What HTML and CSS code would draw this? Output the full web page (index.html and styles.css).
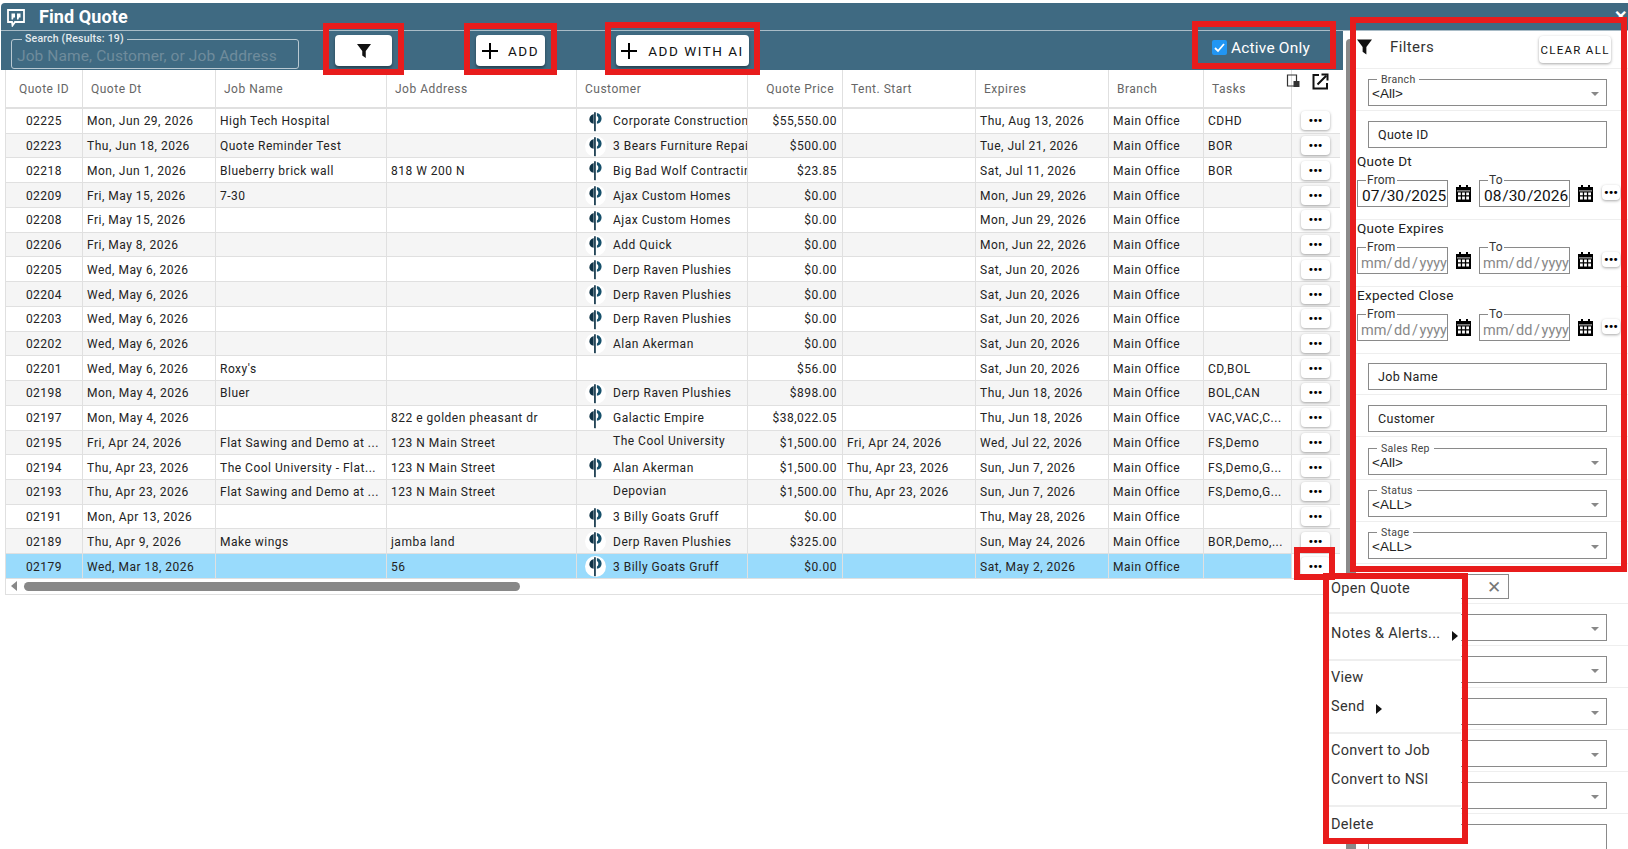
FILE: index.html
```html
<!DOCTYPE html>
<html lang="en">
<head>
    <meta charset="UTF-8">
    <meta name="viewport" content="width=device-width, initial-scale=1.0">
    <title>Find Quote</title>
    <link rel="stylesheet" href="styles.css">
</head>
<body>
    <svg class="defs" width="0" height="0">
        <symbol id="logo" viewBox="0 0 16 22">
            <path d="M6 3C2.500 4 1.500 6.500 1.500 8.500c0 2.500 1.500 4.500 4.500 5Z" fill="#0f3347"/>
            <path d="M9.500 2c3.500.8 5 3.500 5 6 0 2.800-2 5-5 5.500V11c1-.5 1.500-1.800 1.500-3 0-1.500-.5-2.500-1.500-3Z" fill="#16506b"/>
            <path d="M6.500 1h1.800v20.500H6.500Z" fill="#0f3347"/>
        </symbol>
        <symbol id="calendar" viewBox="0 0 15 17">
            <path d="M3 0h2v2h5V0h2v2h3v15H0V2h3Z" fill="#000"/>
            <path d="M1 5.500h13v.8H1Z" fill="#fff"/>
            <path d="M2 7.500h2.800v2.800H2ZM6.100 7.500h2.800v2.800H6.100ZM10.200 7.500H13v2.800h-2.800ZM2 11.600h2.800v2.800H2ZM6.100 11.600h2.800v2.800H6.100ZM10.200 11.600H13v2.800h-2.800Z" fill="#fff"/>
        </symbol>
        <symbol id="funnel" viewBox="0 0 16 16">
            <path d="M0 0h16L10 8v8L6 13V8Z" fill="#111"/>
        </symbol>
        <symbol id="plus" viewBox="0 0 16 16">
            <path d="M7 0h2v7h7v2H9v7H7V9H0V7h7Z" fill="#000"/>
        </symbol>
    </svg>

    <div class="window">
        <div class="title-bar">
            <svg class="title-icon" viewBox="0 0 18 18" width="18" height="18">
                <path d="M1 1h16v12H8l-2.500 3.500L5 13H1Z" fill="none" stroke="#fff" stroke-width="1.800"/>
                <path d="M4.500 4.500h3.500v4H6.500L6 10.500H4.500ZM10 4.500h3.500v4H12l-.5 2H10Z" fill="#fff"/>
            </svg>
            <span class="title-text">Find Quote</span>
            <span class="close-btn">&#10005;</span>
        </div>

        <div class="main">
            <div class="left-pane">
                <div class="toolbar">
                    <div class="search-field">
                        <span class="search-label">Search (Results: 19)</span>
                        <span class="search-placeholder">Job Name, Customer, or Job Address</span>
                    </div>
                    <button class="tool-btn filter-btn"><svg width="14" height="14"><use href="#funnel"/></svg></button>
                    <button class="tool-btn add-btn"><svg width="16" height="16"><use href="#plus"/></svg>ADD</button>
                    <button class="tool-btn ai-btn"><svg width="16" height="16"><use href="#plus"/></svg>ADD WITH AI</button>
                    <label class="active-only"><span class="check">
                        <svg viewBox="0 0 15 15" width="15" height="15"><path d="M3 8l3 3 6-7" fill="none" stroke="#fff" stroke-width="1.800"/></svg>
                    </span>Active Only</label>
                </div>

                <div class="table-frame">
                    <table class="quotes">
                        <thead>
                            <tr>
                                <th class="center">Quote ID</th><th>Quote Dt</th><th>Job Name</th><th>Job Address</th><th>Customer</th><th class="price-head">Quote Price</th><th>Tent. Start</th><th>Expires</th><th>Branch</th><th>Tasks</th>
                                <th class="tools-head">
                                    <svg class="device-icon" viewBox="0 0 14 14" width="14" height="14"><path d="M1.500 1h9v11h-9Z" fill="none" stroke="#333" stroke-width="1.200"/><path d="M7.500 7h6v6h-6Z" fill="#333"/></svg>
                                    <svg class="open-icon" viewBox="0 0 17 17" width="17" height="17"><path d="M7 2H1.500v13.500H15V10" fill="none" stroke="#111" stroke-width="2"/><path d="M5.500 11.500 14 3M9.500 1.500h6v6" fill="none" stroke="#111" stroke-width="2"/></svg>
                                </th>
                            </tr>
                        </thead>
                        <tbody>
                            <tr><td class="center">02225</td><td>Mon, Jun 29, 2026</td><td>High Tech Hospital</td><td></td><td class="cust"><svg class="logo"><use href="#logo"/></svg>Corporate Construction</td><td class="price">$55,550.00</td><td></td><td>Thu, Aug 13, 2026</td><td>Main Office</td><td>CDHD</td><td class="act"><button class="dots">&bull;&bull;&bull;</button></td></tr>
                            <tr><td class="center">02223</td><td>Thu, Jun 18, 2026</td><td>Quote Reminder Test</td><td></td><td class="cust"><svg class="logo"><use href="#logo"/></svg>3 Bears Furniture Repair</td><td class="price">$500.00</td><td></td><td>Tue, Jul 21, 2026</td><td>Main Office</td><td>BOR</td><td class="act"><button class="dots">&bull;&bull;&bull;</button></td></tr>
                            <tr><td class="center">02218</td><td>Mon, Jun 1, 2026</td><td>Blueberry brick wall</td><td>818 W 200 N</td><td class="cust"><svg class="logo"><use href="#logo"/></svg>Big Bad Wolf Contracting</td><td class="price">$23.85</td><td></td><td>Sat, Jul 11, 2026</td><td>Main Office</td><td>BOR</td><td class="act"><button class="dots">&bull;&bull;&bull;</button></td></tr>
                            <tr><td class="center">02209</td><td>Fri, May 15, 2026</td><td>7-30</td><td></td><td class="cust"><svg class="logo"><use href="#logo"/></svg>Ajax Custom Homes</td><td class="price">$0.00</td><td></td><td>Mon, Jun 29, 2026</td><td>Main Office</td><td></td><td class="act"><button class="dots">&bull;&bull;&bull;</button></td></tr>
                            <tr><td class="center">02208</td><td>Fri, May 15, 2026</td><td></td><td></td><td class="cust"><svg class="logo"><use href="#logo"/></svg>Ajax Custom Homes</td><td class="price">$0.00</td><td></td><td>Mon, Jun 29, 2026</td><td>Main Office</td><td></td><td class="act"><button class="dots">&bull;&bull;&bull;</button></td></tr>
                            <tr><td class="center">02206</td><td>Fri, May 8, 2026</td><td></td><td></td><td class="cust"><svg class="logo"><use href="#logo"/></svg>Add Quick</td><td class="price">$0.00</td><td></td><td>Mon, Jun 22, 2026</td><td>Main Office</td><td></td><td class="act"><button class="dots">&bull;&bull;&bull;</button></td></tr>
                            <tr><td class="center">02205</td><td>Wed, May 6, 2026</td><td></td><td></td><td class="cust"><svg class="logo"><use href="#logo"/></svg>Derp Raven Plushies</td><td class="price">$0.00</td><td></td><td>Sat, Jun 20, 2026</td><td>Main Office</td><td></td><td class="act"><button class="dots">&bull;&bull;&bull;</button></td></tr>
                            <tr><td class="center">02204</td><td>Wed, May 6, 2026</td><td></td><td></td><td class="cust"><svg class="logo"><use href="#logo"/></svg>Derp Raven Plushies</td><td class="price">$0.00</td><td></td><td>Sat, Jun 20, 2026</td><td>Main Office</td><td></td><td class="act"><button class="dots">&bull;&bull;&bull;</button></td></tr>
                            <tr><td class="center">02203</td><td>Wed, May 6, 2026</td><td></td><td></td><td class="cust"><svg class="logo"><use href="#logo"/></svg>Derp Raven Plushies</td><td class="price">$0.00</td><td></td><td>Sat, Jun 20, 2026</td><td>Main Office</td><td></td><td class="act"><button class="dots">&bull;&bull;&bull;</button></td></tr>
                            <tr><td class="center">02202</td><td>Wed, May 6, 2026</td><td></td><td></td><td class="cust"><svg class="logo"><use href="#logo"/></svg>Alan Akerman</td><td class="price">$0.00</td><td></td><td>Sat, Jun 20, 2026</td><td>Main Office</td><td></td><td class="act"><button class="dots">&bull;&bull;&bull;</button></td></tr>
                            <tr><td class="center">02201</td><td>Wed, May 6, 2026</td><td>Roxy's</td><td></td><td class="cust"></td><td class="price">$56.00</td><td></td><td>Sat, Jun 20, 2026</td><td>Main Office</td><td>CD,BOL</td><td class="act"><button class="dots">&bull;&bull;&bull;</button></td></tr>
                            <tr><td class="center">02198</td><td>Mon, May 4, 2026</td><td>Bluer</td><td></td><td class="cust"><svg class="logo"><use href="#logo"/></svg>Derp Raven Plushies</td><td class="price">$898.00</td><td></td><td>Thu, Jun 18, 2026</td><td>Main Office</td><td>BOL,CAN</td><td class="act"><button class="dots">&bull;&bull;&bull;</button></td></tr>
                            <tr><td class="center">02197</td><td>Mon, May 4, 2026</td><td></td><td>822 e golden pheasant dr</td><td class="cust"><svg class="logo"><use href="#logo"/></svg>Galactic Empire</td><td class="price">$38,022.05</td><td></td><td>Thu, Jun 18, 2026</td><td>Main Office</td><td>VAC,VAC,C...</td><td class="act"><button class="dots">&bull;&bull;&bull;</button></td></tr>
                            <tr><td class="center">02195</td><td>Fri, Apr 24, 2026</td><td>Flat Sawing and Demo at ...</td><td>123 N Main Street</td><td class="cust no-logo">The Cool University</td><td class="price">$1,500.00</td><td>Fri, Apr 24, 2026</td><td>Wed, Jul 22, 2026</td><td>Main Office</td><td>FS,Demo</td><td class="act"><button class="dots">&bull;&bull;&bull;</button></td></tr>
                            <tr><td class="center">02194</td><td>Thu, Apr 23, 2026</td><td>The Cool University - Flat...</td><td>123 N Main Street</td><td class="cust"><svg class="logo"><use href="#logo"/></svg>Alan Akerman</td><td class="price">$1,500.00</td><td>Thu, Apr 23, 2026</td><td>Sun, Jun 7, 2026</td><td>Main Office</td><td>FS,Demo,G...</td><td class="act"><button class="dots">&bull;&bull;&bull;</button></td></tr>
                            <tr><td class="center">02193</td><td>Thu, Apr 23, 2026</td><td>Flat Sawing and Demo at ...</td><td>123 N Main Street</td><td class="cust no-logo">Depovian</td><td class="price">$1,500.00</td><td>Thu, Apr 23, 2026</td><td>Sun, Jun 7, 2026</td><td>Main Office</td><td>FS,Demo,G...</td><td class="act"><button class="dots">&bull;&bull;&bull;</button></td></tr>
                            <tr><td class="center">02191</td><td>Mon, Apr 13, 2026</td><td></td><td></td><td class="cust"><svg class="logo"><use href="#logo"/></svg>3 Billy Goats Gruff</td><td class="price">$0.00</td><td></td><td>Thu, May 28, 2026</td><td>Main Office</td><td></td><td class="act"><button class="dots">&bull;&bull;&bull;</button></td></tr>
                            <tr><td class="center">02189</td><td>Thu, Apr 9, 2026</td><td>Make wings</td><td>jamba land</td><td class="cust"><svg class="logo"><use href="#logo"/></svg>Derp Raven Plushies</td><td class="price">$325.00</td><td></td><td>Sun, May 24, 2026</td><td>Main Office</td><td>BOR,Demo,...</td><td class="act"><button class="dots">&bull;&bull;&bull;</button></td></tr>
                            <tr class="selected"><td class="center">02179</td><td>Wed, Mar 18, 2026</td><td></td><td>56</td><td class="cust"><svg class="logo"><use href="#logo"/></svg>3 Billy Goats Gruff</td><td class="price">$0.00</td><td></td><td>Sat, May 2, 2026</td><td>Main Office</td><td></td><td class="act"><button class="dots">&bull;&bull;&bull;</button></td></tr>
                        </tbody>
                    </table>
                    <div class="h-scroll">
                        <span class="scroll-arrow"></span>
                        <span class="scroll-thumb"></span>
                    </div>
                </div>
            </div>

            <div class="splitter"></div>

            <aside class="filters">
                <div class="filters-head">
                    <svg width="15" height="16"><use href="#funnel"/></svg>
                    <span class="filters-title">Filters</span>
                    <button class="clear-btn">CLEAR ALL</button>
                </div>

                <div class="row"><div class="field select"><span class="field-label">Branch</span><span class="select-value">&lt;All&gt;</span><span class="arrow"></span></div></div>
                <div class="row plain"><div class="field text">Quote ID</div></div>

                <div class="date-group first">
                    <div class="group-title">Quote Dt</div>
                    <div class="date-row">
                        <div class="date-field"><span class="date-label">From</span>07 /30 /2025</div>
                        <svg class="cal"><use href="#calendar"/></svg>
                        <div class="date-field"><span class="date-label">To</span>08 /30 /2026</div>
                        <svg class="cal"><use href="#calendar"/></svg>
                        <button class="dots mini">&bull;&bull;&bull;</button>
                    </div>
                </div>
                <div class="date-group">
                    <div class="group-title">Quote Expires</div>
                    <div class="date-row">
                        <div class="date-field empty"><span class="date-label">From</span>mm/ dd / yyyy</div>
                        <svg class="cal"><use href="#calendar"/></svg>
                        <div class="date-field empty"><span class="date-label">To</span>mm/ dd / yyyy</div>
                        <svg class="cal"><use href="#calendar"/></svg>
                        <button class="dots mini">&bull;&bull;&bull;</button>
                    </div>
                </div>
                <div class="date-group">
                    <div class="group-title">Expected Close</div>
                    <div class="date-row">
                        <div class="date-field empty"><span class="date-label">From</span>mm/ dd / yyyy</div>
                        <svg class="cal"><use href="#calendar"/></svg>
                        <div class="date-field empty"><span class="date-label">To</span>mm/ dd / yyyy</div>
                        <svg class="cal"><use href="#calendar"/></svg>
                        <button class="dots mini">&bull;&bull;&bull;</button>
                    </div>
                </div>

                <div class="row tight"><div class="field text">Job Name</div></div>
                <div class="row"><div class="field text">Customer</div></div>
                <div class="row loose"><div class="field select"><span class="field-label">Sales Rep</span><span class="select-value">&lt;All&gt;</span><span class="arrow"></span></div></div>
                <div class="row"><div class="field select"><span class="field-label">Status</span><span class="select-value">&lt;ALL&gt;</span><span class="arrow"></span></div></div>
                <div class="row"><div class="field select"><span class="field-label">Stage</span><span class="select-value">&lt;ALL&gt;</span><span class="arrow"></span></div></div>
                <div class="row"><div class="field clearable"><span class="clear-x">&#10005;</span></div></div>
                <div class="row"><div class="field select"><span class="arrow"></span></div></div>
                <div class="row"><div class="field select"><span class="arrow"></span></div></div>
                <div class="row"><div class="field select"><span class="arrow"></span></div></div>
                <div class="row"><div class="field select"><span class="arrow"></span></div></div>
                <div class="row"><div class="field select"><span class="arrow"></span></div></div>
                <div class="row"><div class="field area"></div></div>
            </aside>
        </div>
    </div>

    <!-- Context menu for the selected row -->
    <div class="context-menu">
        <div class="menu-group first-group"><div class="menu-item">Open Quote</div></div>
        <div class="menu-group notes-group"><div class="menu-item">Notes &amp; Alerts...<span class="sub-arrow notes-arrow"></span></div></div>
        <div class="menu-group"><div class="menu-item">View</div><div class="menu-item">Send<span class="sub-arrow send-arrow"></span></div></div>
        <div class="menu-group"><div class="menu-item">Convert to Job</div><div class="menu-item">Convert to NSI</div></div>
        <div class="menu-group delete-group"><div class="menu-item">Delete</div></div>
    </div>

    <!-- Red callouts drawn over the screenshot -->
    <div class="callout c-filter"></div>
    <div class="callout c-add"></div>
    <div class="callout c-ai"></div>
    <div class="callout c-active"></div>
    <div class="callout c-panel"></div>
    <div class="callout c-dots"></div>
    <div class="callout c-menu"></div>
</body>
</html>
```

FILE: styles.css
```css
* {
    box-sizing: border-box;
}

html, body {
    height: 100%;
}

body {
    margin: 0;
    overflow: hidden;
    background-color: white;
    font-family: Roboto, "Liberation Sans", sans-serif;
    color: #222;
}

button {
    font-family: inherit;
    border: none;
    background-color: white;
    cursor: pointer;
}

.defs {
    display: block;
    height: 0;
}

.window {
    display: flex;
    flex-direction: column;
    height: 846px;
    margin: 3px 0 0 1px;
}

/* Title bar */
.title-bar {
    display: flex;
    align-items: center;
    height: 28px;
    flex: none;
    padding-left: 6px;
    background-color: #3f6a82;
    border-top-left-radius: 4px;
    border-bottom: 1px solid #a9bcc7;
    color: white;
}

.title-icon {
    margin-top: 2px;
}

.title-text {
    margin-left: 14px;
    font-size: 18px;
    font-weight: 700;
    letter-spacing: 0.1px;
}

.close-btn {
    margin-left: auto;
    margin-right: 1px;
    font-size: 16px;
    font-weight: 700;
}

.main {
    display: flex;
    flex: 1;
    min-height: 0;
    overflow: hidden;
}

.left-pane {
    width: 1345px;
    flex: none;
}

/* Toolbar */
.toolbar {
    display: flex;
    align-items: center;
    width: 1342px;
    height: 39px;
    background-color: #3f6a82;
}

.search-field {
    position: relative;
    width: 288px;
    height: 30px;
    margin: 6px 0 0 10px;
    padding: 6px 5px 0;
    border: 1px solid #b9c9d2;
    border-radius: 3px;
}

.search-label {
    position: absolute;
    top: -7px;
    left: 10px;
    padding: 0 3px;
    background-color: #3f6a82;
    color: #e6ecef;
    font-size: 10.5px;
    font-weight: 500;
    line-height: 12px;
    letter-spacing: 0.2px;
}

.search-placeholder {
    color: #6f8c9c;
    font-size: 15.5px;
    line-height: 19px;
    letter-spacing: 0.1px;
    white-space: nowrap;
}

.tool-btn {
    display: flex;
    align-items: center;
    justify-content: center;
    height: 31px;
    padding: 0;
    border-radius: 4px;
    box-shadow: 0 2px 3px rgba(0, 0, 0, 0.4);
    color: #111;
    font-size: 13.5px;
    letter-spacing: 1.5px;
    white-space: nowrap;
}

.filter-btn {
    width: 57px;
    margin-left: 36px;
}

.add-btn {
    width: 69px;
    margin-left: 84px;
    gap: 10px;
}

.ai-btn {
    width: 133px;
    margin-left: 71px;
    gap: 11px;
}

.active-only {
    display: flex;
    align-items: center;
    margin-left: auto;
    margin-right: 33px;
    margin-top: -6px;
    color: white;
    font-size: 15.500px;
    letter-spacing: 0.2px;
}

.check {
    display: flex;
    width: 15px;
    height: 15px;
    margin-right: 4px;
    border-radius: 2px;
    background-color: #2196f3;
}

/* Table */
.table-frame {
    width: 1336px;
    margin-left: 4px;
    border: solid #e0e0e0;
    border-width: 0 0 1px 1px;
}

.quotes {
    display: grid;
    grid-template-columns: 77px 133px 171px 190px 171px 95px 133px 133px 95px 88px 48px;
    grid-template-rows: 39px;
    grid-auto-rows: 24.74px;
    border-collapse: collapse;
    font-size: 12px;
    letter-spacing: 0.5px;
    color: #222;
}

.quotes thead, .quotes tbody, .quotes tr {
    display: contents;
}

.quotes th {
    display: flex;
    align-items: center;
    padding: 0 0 0 8px;
    border-right: 1px solid #e0e0e0;
    border-bottom: 2px solid #e0e0e0;
    color: #666;
    font-size: 12px;
    font-weight: 400;
    white-space: nowrap;
}

.quotes th.center {
    justify-content: center;
    padding-left: 0;
}

.quotes th.price-head {
    justify-content: flex-end;
    padding-right: 8px;
}

.quotes th.tools-head {
    position: relative;
    padding: 0;
    border-right: none;
    border-bottom: none;
}

.device-icon {
    position: absolute;
    top: 4px;
    left: -6px;
}

.open-icon {
    position: absolute;
    top: 3px;
    left: 20px;
}

.quotes td {
    display: flex;
    align-items: center;
    overflow: hidden;
    padding: 1px 0 0 4px;
    border-right: 1px solid #e0e0e0;
    border-bottom: 1px solid #e0e0e0;
    white-space: nowrap;
}

.quotes td.center {
    justify-content: center;
    padding-left: 0;
}

.quotes td.price {
    justify-content: flex-end;
    padding-right: 5px;
}

.quotes td.cust {
    padding-left: 11px;
}

.quotes td.no-logo {
    padding-left: 36px;
    padding-bottom: 3px;
}

.quotes td.act {
    justify-content: flex-end;
    padding: 0 10px 0 0;
    border-right: none;
    overflow: visible;
}

.quotes tbody tr:nth-child(even) td {
    background-color: #f5f5f5;
}

.quotes tbody tr.selected td {
    background-color: #99dbfc;
}

.quotes tbody tr.selected td.act {
    background-color: white;
}

.logo {
    width: 21px;
    height: 21px;
    flex: none;
    margin: 0 7px 0 -3px;
    padding: 0 3px;
    border-radius: 50%;
}

.quotes tbody tr:nth-child(even) .logo, .selected .logo {
    background-color: white;
}

.dots {
    display: flex;
    align-items: center;
    justify-content: center;
    width: 29px;
    height: 19px;
    padding: 0;
    border-radius: 4px;
    box-shadow: 0 1px 3px rgba(0, 0, 0, 0.35);
    color: #000;
    font-size: 13px;
    font-weight: 700;
    letter-spacing: 0;
}

.dots.mini {
    width: 18px;
    height: 15px;
    margin-left: 9px;
    margin-top: -2px;
}

.h-scroll {
    display: flex;
    align-items: center;
    height: 15px;
    padding-left: 5px;
}

.scroll-arrow {
    width: 0;
    height: 0;
    border-top: 5px solid transparent;
    border-bottom: 5px solid transparent;
    border-right: 6px solid #888;
}

.scroll-thumb {
    width: 496px;
    height: 9px;
    margin-left: 7px;
    border-radius: 5px;
    background-color: #888;
}

.splitter {
    width: 10px;
    flex: none;
    margin-top: 8px;
    background-color: #8a8a8a;
    border-top-left-radius: 4px;
}

/* Filter panel */
.filters {
    flex: 1;
    padding-top: 0;
    background-color: white;
    overflow: hidden;
}

.filters-head {
    display: flex;
    align-items: center;
    height: 38px;
    padding: 0 0 6px 1px;
    border-bottom: 1px solid #eee;
}

.filters-title {
    margin-left: 18px;
    font-size: 15px;
    letter-spacing: 0.4px;
    color: #333;
}

.clear-btn {
    width: 72px;
    height: 27px;
    margin-left: auto;
    margin-right: 17px;
    margin-top: 6px;
    padding: 0;
    border-radius: 4px;
    box-shadow: 0 1px 3px rgba(0, 0, 0, 0.35);
    color: #111;
    font-size: 11.500px;
    letter-spacing: 1.300px;
    white-space: nowrap;
}

.row {
    padding: 10px 21px 4px 12px;
    border-bottom: 1px solid #eee;
}

.row.plain {
    padding-bottom: 0;
    border-bottom: none;
}

.row.tight {
    padding-top: 9px;
}

.row.loose {
    padding-top: 11px;
}

.field {
    position: relative;
    display: flex;
    align-items: center;
    height: 27px;
    border: 1px solid #8a8a8a;
    font-size: 12.500px;
    letter-spacing: 0.3px;
}

.field.text {
    padding-left: 9px;
    color: #222;
}

.field.clearable {
    width: 141px;
    height: 25px;
    justify-content: flex-end;
    padding-right: 7px;
}

.field.area {
    height: 60px;
}

.clear-x {
    color: #777;
    font-size: 17px;
}

.field-label {
    position: absolute;
    top: -6px;
    left: 8px;
    padding: 0 4px;
    background-color: white;
    color: #444;
    font-size: 10.500px;
    line-height: 11px;
}

.select-value {
    padding-left: 3px;
    margin-top: 2px;
    font-family: "Liberation Sans", Arial, sans-serif;
    font-size: 13.500px;
    letter-spacing: 0;
}

.arrow {
    position: absolute;
    top: 12px;
    right: 7px;
    width: 0;
    height: 0;
    border-left: 4px solid transparent;
    border-right: 4px solid transparent;
    border-top: 4px solid #888;
}

.date-group {
    padding-bottom: 12px;
    border-bottom: 1px solid #eee;
}

.date-group.first {
    padding-top: 5px;
}

.group-title {
    height: 16px;
    padding-left: 1px;
    font-size: 13.500px;
    line-height: 16px;
    letter-spacing: 0.3px;
    color: #222;
}

.date-row {
    display: flex;
    align-items: center;
    margin-top: 11px;
    padding-left: 1px;
}

.date-field {
    position: relative;
    width: 91px;
    height: 27px;
    padding: 4px 0 0 4px;
    border: 1px solid #8a8a8a;
    font-size: 15.500px;
    line-height: 22px;
    word-spacing: -3px;
    white-space: nowrap;
    color: #111;
}

.date-field.empty {
    padding: 5px 0 0 3px;
    font-size: 14.500px;
    word-spacing: -2px;
    color: #888;
}

.date-label {
    position: absolute;
    top: -7px;
    left: 8px;
    padding: 0 1px;
    background-color: white;
    color: #333;
    font-size: 12px;
    line-height: 12px;
    letter-spacing: 0.2px;
    word-spacing: 0;
}

.cal {
    width: 15px;
    height: 17px;
    margin: -1px 8px 0 8px;
    flex: none;
}

.cal + .dots.mini {
    margin-left: 1px;
}

/* Context menu */
.context-menu {
    position: absolute;
    top: 576px;
    left: 1329px;
    width: 132px;
    height: 266px;
    background-color: white;
    color: #333;
    font-size: 14.500px;
    letter-spacing: 0.3px;
}

.menu-group {
    border-top: 2px solid #eee;
    padding: 2px 0 11px;
}

.menu-group.notes-group {
    padding: 5px 0 11px;
}

.menu-group.delete-group {
    padding: 3px 0 0;
}

.menu-group.first-group {
    border-top: none;
    height: 36px;
    padding: 0;
}

.menu-item {
    position: relative;
    height: 29px;
    padding-left: 2px;
    line-height: 29px;
    white-space: nowrap;
}

.first-group .menu-item {
    height: 26px;
    line-height: 26px;
}

.sub-arrow {
    position: absolute;
    top: 12px;
    width: 0;
    height: 0;
    border-top: 5px solid transparent;
    border-bottom: 5px solid transparent;
    border-left: 6px solid #111;
}

.notes-arrow {
    left: 123px;
}

.send-arrow {
    left: 47px;
}

/* Red annotation boxes */
.callout {
    position: absolute;
    border: 6px solid #e81c1c;
    pointer-events: none;
}

.c-filter {
    top: 23px;
    left: 323px;
    width: 81px;
    height: 52px;
}

.c-add {
    top: 23px;
    left: 464px;
    width: 93px;
    height: 52px;
}

.c-ai {
    top: 22px;
    left: 605px;
    width: 155px;
    height: 53px;
}

.c-active {
    top: 21px;
    left: 1192px;
    width: 144px;
    height: 48px;
}

.c-panel {
    top: 17px;
    left: 1350px;
    width: 277px;
    height: 555px;
}

.c-dots {
    top: 547px;
    left: 1294px;
    width: 41px;
    height: 33px;
}

.c-menu {
    top: 573px;
    left: 1323px;
    width: 145px;
    height: 271px;
}
```
